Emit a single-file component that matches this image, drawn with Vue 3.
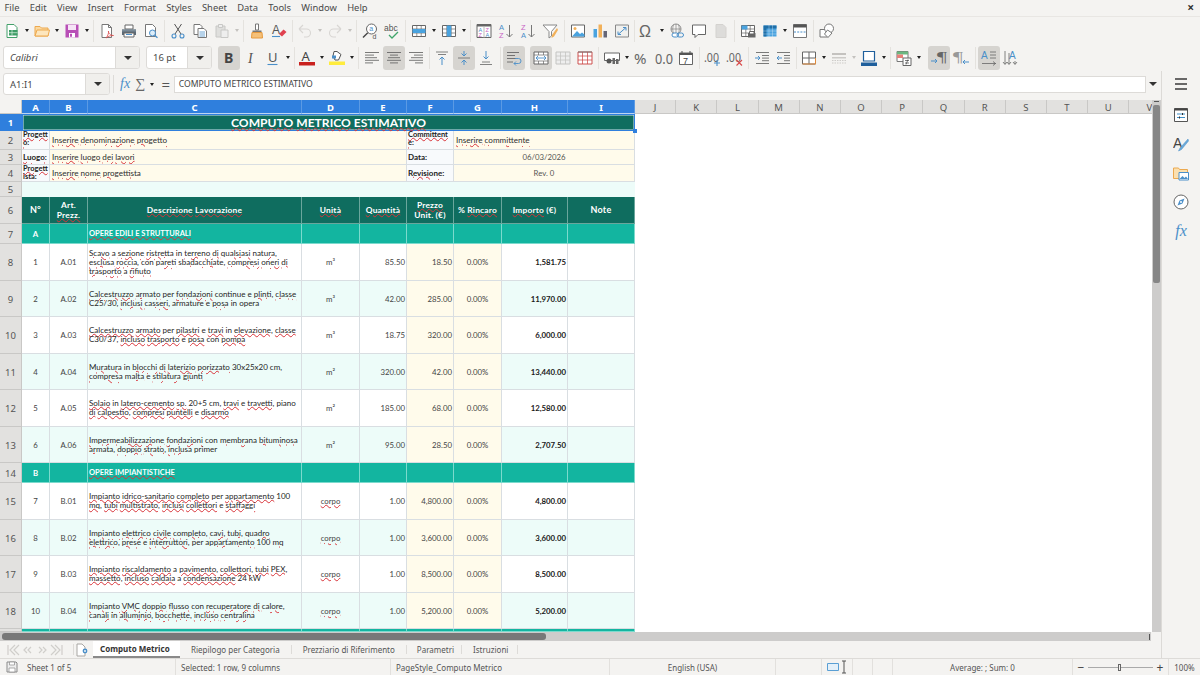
<template>
  <div class="app">
    <div class="menubar">
      <span v-for="m in menus" :key="m">{{ m }}</span>
      <b class="close">×</b>
    </div>

    <div class="toolbar tb1">
      <template v-for="(it, i) in row1" :key="i">
        <span v-if="it.gap" class="gap" :style="{ width: it.gap + 'px' }"><i v-if="it.line"></i></span>
        <span v-else-if="it.drop" class="drop" :class="{ off: it.off }" :style="{ width: it.drop + 'px' }"></span>
        <span v-else class="tool" :class="{ on: it.on }"><svg viewBox="0 0 16 16" v-html="icons[it.n]"></svg></span>
      </template>
    </div>

    <div class="toolbar tb2">
      <div class="combo font"><em>Calibri</em><span class="arrow"></span></div>
      <div class="combo size"><span>16 pt</span><span class="arrow"></span></div>
      <template v-for="(it, i) in row2" :key="i">
        <span v-if="it.gap" class="gap" :style="{ width: it.gap + 'px' }"><i v-if="it.line"></i></span>
        <span v-else-if="it.drop" class="drop" :class="{ off: it.off }" :style="{ width: it.drop + 'px' }"></span>
        <span v-else class="tool" :class="{ on: it.on }"><svg viewBox="0 0 16 16" v-html="icons[it.n]"></svg></span>
      </template>
    </div>

    <div class="middle">
      <div class="work">
        <div class="formula">
          <div class="combo namebox"><span>A1:I1</span><span class="arrow"></span></div>
          <i class="fline"></i>
          <span class="fx">fx</span>
          <span class="sigma">∑</span>
          <span class="drop small"></span>
          <span class="equals">=</span>
          <div class="input">COMPUTO METRICO ESTIMATIVO</div>
          <span class="fdrop"></span>
        </div>

        <div class="sheet-wrap">
          <div class="sheet">
            <div class="sh corner"></div>
            <div v-for="(c, i) in columns" :key="c" class="sh col" :class="{ sel: i < 9 }">{{ c }}</div>

            <div class="sh rownum sel">1</div>
            <div class="title"><span><span class="bad">COMPUTO</span> <span class="bad">METRICO</span> <span class="bad">ESTIMATIVO</span></span><i class="handle"></i></div>

            <div class="sh rownum">2</div>
            <div class="c label wrapword"><span class="bad">Progetto:</span></div>
            <div class="c yellow left merged3"><div><span v-for="(w, i) in words('Inserire denominazione progetto')" :key="i"><span :class="{ bad: w.bad }">{{ w.t }}</span>{{ ' ' }}</span></div></div>
            <div class="c label wrapword"><span class="bad">Committente:</span></div>
            <div class="c yellow left merged2"><div><span class="bad">Inserire</span> <span class="bad">committente</span></div></div>

            <div class="sh rownum">3</div>
            <div class="c label"><span class="bad">Luogo:</span></div>
            <div class="c yellow left merged3"><div><span v-for="(w, i) in words('Inserire luogo dei lavori')" :key="i"><span :class="{ bad: w.bad }">{{ w.t }}</span>{{ ' ' }}</span></div></div>
            <div class="c label">Data:</div>
            <div class="c yellow center merged2 tiny">06/03/2026</div>

            <div class="sh rownum">4</div>
            <div class="c label wrapword"><span class="bad">Progettista:</span></div>
            <div class="c yellow left merged3"><div><span v-for="(w, i) in words('Inserire nome progettista')" :key="i"><span :class="{ bad: w.bad }">{{ w.t }}</span>{{ ' ' }}</span></div></div>
            <div class="c label"><span class="bad">Revisione:</span></div>
            <div class="c yellow center merged2 tiny">Rev. 0</div>

            <div class="sh rownum">5</div>
            <div class="c blank all"></div>

            <div class="sh rownum">6</div>
            <div v-for="h in heads" :key="h.t" class="c head" :class="h.cls"><div v-html="h.t"></div></div>

            <template v-for="r in rows" :key="r.n">
              <div class="sh rownum">{{ r.n }}</div>
              <template v-if="r.section">
                <div class="c sect center strong">{{ r.id }}</div>
                <div class="c sect"></div>
                <div class="c sect left strong"><span class="bad sectbad">{{ r.section }}</span></div>
                <div v-for="k in 6" :key="k" class="c sect"></div>
              </template>
              <template v-else>
                <div class="c center" :class="{ alt: r.alt }">{{ r.no }}</div>
                <div class="c center" :class="{ alt: r.alt }">{{ r.art }}</div>
                <div class="c left desc" :class="{ alt: r.alt }">
                  <div v-for="(l, j) in r.lines" :key="j">
                    <span v-for="(w, k) in words(l)" :key="k"><span :class="{ bad: w.bad }">{{ w.t }}</span>{{ ' ' }}</span>
                  </div>
                </div>
                <div class="c center" :class="{ alt: r.alt }"><span :class="{ bad: r.unit === 'corpo' }">{{ r.unit }}</span></div>
                <div class="c right" :class="{ alt: r.alt }">{{ r.qty }}</div>
                <div class="c right yellow">{{ r.price }}</div>
                <div class="c center yellow">0.00%</div>
                <div class="c right strong dark" :class="{ alt: r.alt }">{{ r.total }}</div>
                <div class="c" :class="{ alt: r.alt }"></div>
              </template>
            </template>

            <div class="sh rownum"></div>
            <div v-for="k in 9" :key="'e' + k" class="c sect"></div>
          </div>

          <div class="vscroll"><i class="vmark"></i><i class="vthumb"></i></div>
        </div>

        <div class="hscroll"><i class="hthumb"></i><i class="hmark"></i></div>

        <div class="tabbar">
          <div class="nav">
            <svg viewBox="0 0 56 12" width="56" height="12">
              <g fill="none" stroke="#d0cecb" stroke-width="1.2">
                <path d="M1 1v10M8 1 3 6l5 5M12 1 7 6l5 5" />
                <path d="M20 3l-3 3 3 3M24 3l-3 3 3 3M32 3l3 3-3 3M36 3l3 3-3 3" />
                <path d="M44 1l5 5-5 5M48 1l5 5-5 5M55 1v10" />
              </g>
            </svg>
          </div>
          <i class="tabline"></i>
          <svg class="newsheet" viewBox="0 0 12 14" width="12" height="14"><path d="M1 1h5l3 3v9H1z" fill="#fff" stroke="#a8a6a3" /><circle cx="9" cy="8" r="2.400" fill="#4a8fc9" /><circle cx="9" cy="8" r=".9" fill="#fff" /></svg>
          <div class="tab active"><span>Computo Metrico</span></div>
          <div v-for="t in tabs" :key="t" class="tab">{{ t }}</div>
        </div>
      </div>

      <aside class="sidebar">
        <svg viewBox="0 0 16 16"><path d="M2 3h12M2 8h12M2 13h12" stroke="#3a3a3a" stroke-width="1.6" fill="none" /></svg>
        <svg viewBox="0 0 16 16"><path d="M1.5 1.5h13v13h-13z" fill="#fff" stroke="#555" /><path d="M1.5 1.5h13v2h-13z" fill="#444" /><path d="M4 7h8M4 10.5h8" stroke="#3f8fc8" /><path d="M9.5 6v2M6.5 9.5v2" stroke="#333" /></svg>
        <svg viewBox="0 0 16 16"><text x="0" y="12" font-size="14" font-family="Liberation Sans" fill="#444">A</text><path d="M15 3 7 12l-1.5 3 3-1.5L15.500 5z" fill="#6aa9d8" stroke="#4a8fc9" stroke-width=".5" /></svg>
        <svg viewBox="0 0 16 16"><path d="M.5 3h5l1 1.500h8v9H.5z" fill="#fbe0b0" stroke="#eca94f" /><path d="M6 7.500h9.500v7.500H6z" fill="#fff" stroke="#4a8fc9" /><path d="M6.500 14l3-3 2 2 1.500-1.500 2 2.500z" fill="#4a8fc9" /></svg>
        <svg viewBox="0 0 16 16"><circle cx="8" cy="8" r="7" fill="#fff" stroke="#666" /><path d="M11.500 4.500 9.500 9.500l-5 2 2-5z" fill="#4a8fc9" /><circle cx="8" cy="8" r="1" fill="#fff" /></svg>
        <span class="side-fx">fx</span>
      </aside>
    </div>

    <div class="statusbar">
      <div class="st" style="width: 176px">
        <svg viewBox="0 0 12 12" width="12" height="12"><path d="M1 1h9l1 1v9H1z" fill="#eee" stroke="#8a8a8a" /><path d="M3 7h6v4H3zM3.500 1h5v3h-5z" fill="#fff" stroke="#8a8a8a" stroke-width=".7" /></svg>
        <span>Sheet 1 of 5</span>
      </div>
      <div class="st tight" style="width: 215px">Selected: 1 row, 9 columns</div>
      <div class="st tight" style="width: 219px">PageStyle_Computo Metrico</div>
      <div class="st mid" style="width: 166px">English (USA)</div>
      <div class="st" style="width: 46px"></div>
      <div class="st mid" style="width: 31px">
        <svg viewBox="0 0 20 14" width="20" height="14"><path d="M.5 3.500h11v7H.5z" fill="#e4f0f9" stroke="#5a9fd4" /><path d="M15 1h4M15 13h4M17 1v12" stroke="#555" fill="none" /></svg>
      </div>
      <div class="st" style="width: 20px"></div>
      <div class="st" style="width: 20px"></div>
      <div class="st mid" style="width: 180px">Average: ; Sum: 0</div>
      <div class="zoom">
        <span class="zbtn">−</span>
        <span class="zline"><i></i></span>
        <span class="zbtn">+</span>
      </div>
      <div class="st mid pct">100%</div>
    </div>
  </div>
</template>

<script setup>
const menus = ['File', 'Edit', 'View', 'Insert', 'Format', 'Styles', 'Sheet', 'Data', 'Tools', 'Window', 'Help']
const columns = 'ABCDEFGHIJKLMNOPQRSTUV'.split('')
const tabs = ['Riepilogo per Categoria', 'Prezziario di Riferimento', 'Parametri', 'Istruzioni']

// words the spell checker does not flag
const okWords = ['a', 'in', 'e', 'per', 'con', 'continue', 'armature', 'opera', 'piano', 'primer', '100', '24', 'kW', 'cm', '30x25x20', 'cm,', '20+5', 'C25/30,', 'C30/37,']

function words(text) {
  return text.split(' ').map(t => ({ t, bad: !okWords.includes(t) }))
}

// toolbar strings: name, name* = pressed, d = dropdown, x = dimmed dropdown, |n = separator, _n = blank space
function parse(str) {
  return str.split(' ').map(s => {
    if (s[0] === '|') return { gap: +s.slice(1), line: true }
    if (s[0] === '_') return { gap: +s.slice(1) }
    if (s === 'd') return { drop: 8 }
    if (s === 'x') return { drop: 8, off: true }
    if (s.endsWith('*')) return { n: s.slice(0, -1), on: true }
    return { n: s }
  })
}

const row1 = parse('new d open d save d |5 pdf print preview |5 cut copy paste x |5 brush clearfmt |4 undo x redo x |5 find spell |5 rowsbtn d colsbtn d |5 sort asc desc filter |6 image chart pivot |3 omega d link comment hf |5 printarea freeze d split |5 shapes')
const row2 = parse('bold* italic under d |4 fcolor d hilite d |5 aleft acenter* aright |4 atop amid* abot |6 wrap* _5 merge* unmerge redtable |5 money d percent number date |5 addec deldec |5 indent outdent |3 borders d lines x bcolor d |5 cond d _5 ltr* rtl |6 tbl* tbr')

const grid = '<path d="M1.500 2.500h13v11h-13z" fill="#fff" stroke="#666"/><path d="M1.500 6h13M1.500 10h13M5.800 2.500v11M10.200 2.500v11" stroke="#666" stroke-width=".7"/>'
// stacked lines, each as [x1, x2], evenly spaced
const stack = (pairs, top = 2.5, step = 2.6, c = '#5a5a5a') =>
  pairs.map((p, i) => `<path d="M${p[0]} ${top + i * step}H${p[1]}" stroke="${c}" stroke-width=".8"/>`).join('')

const icons = {
  new: '<path d="M3 1.500h7l3 3v10H3z" fill="#fff" stroke="#43a06a"/><path d="M5 7h8.500v5.500H5z" fill="#3e9c66"/><path d="M8 7v5.500M5 9.700h8.500" stroke="#d8f0e0" stroke-width=".7"/>',
  open: '<path d="M1 13V3.500h5l1.500 1.500H14V13z" fill="#fbd9a0" stroke="#eda94f"/><path d="M1 13l2-6h12.500L14 13z" fill="#fde6bd" stroke="#eda94f"/>',
  save: '<path d="M1.500 1.500h13v13h-13z" fill="#b84fb6"/><path d="M4 2h8v5H4z" fill="#f6e4f6"/><path d="M5 10h6v4.500H5z" fill="#fff"/><path d="M6 10.800h2v3H6z" fill="#b84fb6"/>',
  pdf: '<path d="M3 1.500h6.500l3 3v10H3z" fill="#fff" stroke="#777"/><path d="M9.500 1.500v3h3" fill="none" stroke="#777"/><path d="M7 15c2-2 3-6 2.500-7-.5 2 2 4.500 5 4.500-3 0-5 .5-7.500 2.500z" fill="none" stroke="#d94a4a" stroke-width=".8"/>',
  print: '<path d="M4 2h8v4H4z" fill="#fff" stroke="#666"/><path d="M1 6.500h14v5.500H1z" fill="#5c6a76"/><path d="M1 6.500h14v2H1z" fill="#7a8a96"/><path d="M3 10h10v4H3z" fill="#fff" stroke="#666"/><path d="M5 11.500h6" stroke="#4a8fc9"/>',
  preview: '<path d="M2.500 1.500h7l3 3v9h-10z" fill="#fff" stroke="#777"/><circle cx="9.500" cy="10" r="3" fill="#dcedf9" stroke="#4a8fc9"/><path d="M11.500 12.300l3 2.500" stroke="#4a8fc9" stroke-width="1.400"/>',
  cut: '<path d="M4.500 1l6.500 10M11.500 1 5 11" stroke="#555" stroke-width="1" fill="none"/><circle cx="4" cy="13" r="2" fill="none" stroke="#4a8fc9" stroke-width="1.100"/><circle cx="12" cy="13" r="2" fill="none" stroke="#4a8fc9" stroke-width="1.100"/>',
  copy: '<path d="M2 1.500h6l2 2v8H2z" fill="#fff" stroke="#777"/><path d="M6 5.500h6l2.500 2.500v6.500H6z" fill="#fff" stroke="#777"/><path d="M7.500 9h5.500M7.500 11h5.500M7.500 13h5.500" stroke="#4a8fc9" stroke-width=".8"/>',
  paste: '<path d="M2 3h9v11H2z" fill="#dfdfdd" stroke="#c8c8c6"/><path d="M4.500 1.500h4v3h-4z" fill="#eee" stroke="#c8c8c6"/><path d="M7 7h7v7.500H7z" fill="#eee" stroke="#c8c8c6"/>',
  brush: '<path d="M6.500 1h3v6h-3z" fill="#fff" stroke="#777"/><path d="M3.500 7.500h9v2h-9z" fill="#777"/><path d="M3 9.500h10l.5 5.500h-11z" fill="#f5c078" stroke="#e69a3f"/>',
  clearfmt: '<text x="1" y="11" font-size="12" font-family="Liberation Sans" fill="#555">A</text><path d="M1 13.500h8" stroke="#4a8fc9" stroke-width="1.100"/><path d="M8 11l4.500-4.500 3 2.500-4.500 4.500z" fill="#e0414f"/>',
  undo: '<path d="M2 6l4-4M2 6l4 4M2 6h7.500a4 4 0 0 1 0 8H7" fill="none" stroke="#d8d6d3" stroke-width="1.100"/>',
  redo: '<path d="M14 6l-4-4M14 6l-4 4M14 6H6.500a4 4 0 0 0 0 8H9" fill="none" stroke="#d8d6d3" stroke-width="1.100"/>',
  find: '<circle cx="9.500" cy="6" r="5" fill="#fff" stroke="#666"/><path d="M5.800 9.800 1 14.500" stroke="#444" stroke-width="1.400"/><text x="7.200" y="8" font-size="7" font-family="Liberation Sans" fill="#4a8fc9">a</text><text x="10.500" y="15.500" font-size="7" font-family="Liberation Sans" fill="#555">d</text>',
  spell: '<text x="0" y="8" font-size="8.500" font-family="Liberation Sans" fill="#555">abc</text><path d="M5 12l3 3 6-6" fill="none" stroke="#3fa56a" stroke-width="1.300"/>',
  rowsbtn: grid + '<path d="M1.500 6h13v4h-13z" fill="#4aa3df"/>',
  colsbtn: grid + '<path d="M5.800 2.500h4.400v11H5.800z" fill="#4aa3df"/>',
  sort: '<path d="M1 1.500h14v13H1z" fill="#fff" stroke="#666"/><path d="M1 1.500h14v2H1z" fill="#666"/><path d="M8 4v10.500" stroke="#bbb"/><text x="2.500" y="9" font-size="5.500" font-family="Liberation Sans" fill="#4a8fc9">A</text><text x="2.500" y="14" font-size="5.500" font-family="Liberation Sans" fill="#c860c4">Z</text><text x="9.500" y="9" font-size="5.500" font-family="Liberation Sans" fill="#c860c4">Z</text><text x="9.500" y="14" font-size="5.500" font-family="Liberation Sans" fill="#4a8fc9">A</text>',
  asc: '<text x="1" y="7" font-size="7.500" font-family="Liberation Sans" fill="#4a8fc9">A</text><text x="1" y="15" font-size="7.500" font-family="Liberation Sans" fill="#c860c4">Z</text><path d="M11.500 2v12M8.500 11l3 3 3-3" fill="none" stroke="#777"/>',
  desc: '<text x="1" y="7" font-size="7.500" font-family="Liberation Sans" fill="#c860c4">Z</text><text x="1" y="15" font-size="7.500" font-family="Liberation Sans" fill="#4a8fc9">A</text><path d="M11.500 2v12M8.500 11l3 3 3-3" fill="none" stroke="#777"/>',
  filter: '<path d="M1 2h14L9.500 8.500V13L7 15V8.500z" fill="#fff" stroke="#888"/><path d="M15 5 10 12l-.5 3 2.500-1.500L16 7z" fill="#f2b15a"/>',
  image: '<path d="M1.500 2h13v12h-13z" fill="#fff" stroke="#666"/><circle cx="5" cy="5.500" r="1.500" fill="#f2b15a"/><path d="M2 13.500 7 8l3 3 2-1.500 2.500 2v2z" fill="#4aa3df"/>',
  chart: '<path d="M1.500 6h3.500v8.500H1.500z" fill="#4aa3df"/><path d="M6.500 1.500H10v13H6.500z" fill="#f2b15a"/><path d="M11.500 8H15v6.500h-3.500z" fill="#667"/>',
  pivot: '<path d="M1.500 2h13v12h-13z" fill="#f0f0ee" stroke="#888"/><path d="M4 11.500 12 4.500M9 4.500h3v3M7 11.500H4v-3" fill="none" stroke="#4a8fc9"/>',
  omega: '<text x="0" y="14" font-size="16" font-family="Liberation Sans" fill="#666">Ω</text>',
  link: '<circle cx="7" cy="6" r="5" fill="none" stroke="#777" stroke-width=".8"/><path d="M2 6h10M7 1v10M4.500 1.800c-1 2.500-1 6 0 8.400M9.500 1.800c1 2.500 1 6 0 8.400" fill="none" stroke="#777" stroke-width=".6"/><rect x="3" y="10" width="6.500" height="4" rx="2" fill="#fff" stroke="#4a8fc9"/><rect x="8" y="10" width="6.500" height="4" rx="2" fill="none" stroke="#4a8fc9"/>',
  comment: '<path d="M1.500 2h13v9.500H7L4 14.500v-3H1.500z" fill="#fff" stroke="#666"/>',
  hf: '<path d="M3 1.500h7l3 3v10H3z" fill="#dddcda" stroke="#d4d2cf"/>',
  printarea: grid + '<path d="M1.500 2.500h6v4h-6z" fill="#4aa3df"/><path d="M8 10h7.500v4.500H8z" fill="#666"/><path d="M9.500 8.500h4.500v2.500H9.500z" fill="#fff" stroke="#666"/>',
  freeze: '<path d="M1.500 2.500h13v11h-13z" fill="#4aa3df"/><path d="M1.500 2.500h13v3h-13zM1.500 2.500h3v11h-3z" fill="#1f6fa8"/><path d="M1.500 8h13M1.500 11h13M7 2.500v11M10.500 2.500v11" stroke="#fff" stroke-width=".6" stroke-dasharray="1 1"/>',
  split: '<path d="M1.500 1.500h13v13h-13z" fill="#fff" stroke="#777"/><path d="M1.500 1.500h13v3h-13z" fill="#555"/><path d="M2 9h12" stroke="#4a8fc9" stroke-dasharray="2 1.200"/>',
  shapes: '<path d="M1 6.500h7.500V14H1z" fill="#fff" stroke="#777"/><circle cx="10" cy="5.500" r="4.500" fill="#fff" stroke="#777"/><path d="M8.500 7l4.500 3-4 4.500L5.500 11z" fill="#fff" stroke="#777"/>',
  bold: '<text x="3" y="13" font-size="14" font-weight="700" font-family="Noto Sans" fill="#444">B</text>',
  italic: '<text x="5" y="13" font-size="14" font-style="italic" font-family="Liberation Serif" fill="#555">I</text>',
  under: '<text x="3" y="11.500" font-size="13" font-family="Noto Sans" fill="#555">U</text><path d="M2.500 14.500h10" stroke="#4a8fc9" stroke-width="1.100"/>',
  fcolor: '<text x="2.500" y="11" font-size="13" font-family="Noto Sans" fill="#444">A</text><path d="M0 12h16v3.500H0z" fill="#c9211e"/>',
  hilite: '<path d="M5 1.500h3l4 3-2.500 5.500H6L4 6z" fill="#fff" stroke="#555"/><path d="M3 5.500h4v3H3z" fill="#4a8fc9"/><path d="M0 11.500h16V15H0z" fill="#ffec3d"/>',
  aleft: stack([[1, 15], [1, 10], [1, 13], [1, 15], [1, 9]]),
  acenter: stack([[1, 15], [4, 12], [2, 14], [1, 15], [4, 12]]),
  aright: stack([[1, 15], [6, 15], [3, 15], [1, 15], [7, 15]]),
  atop: '<path d="M2 2h12M4 4.500h8" stroke="#666" stroke-width=".8"/><path d="M8 15V7M5.500 9.500 8 7l2.500 2.500" fill="none" stroke="#4a8fc9"/>',
  amid: '<path d="M2 8h12" stroke="#666" stroke-width=".8"/><path d="M8 1v5M5.500 3.500 8 6l2.500-2.500M8 15v-5M5.500 12.500 8 10l2.500 2.500" fill="none" stroke="#4a8fc9"/>',
  abot: '<path d="M2 14.500h12M4 12h8" stroke="#666" stroke-width=".8"/><path d="M8 1v8M5.500 6.500 8 9l2.500-2.500" fill="none" stroke="#4a8fc9"/>',
  wrap: stack([[1, 13], [1, 9], [1, 10]], 2.5, 3) + stack([[1, 7]], 12) + '<path d="M9 8.500h3.500a2 2 0 0 1 0 5H8M10 11.500l-2 2 2 2" fill="none" stroke="#4a8fc9" stroke-width=".9"/>',
  merge: '<path d="M1 2h14v12H1z" fill="#fff" stroke="#666"/><path d="M1 5h14M1 11h14M5.500 2v3M10.500 2v3M5.500 11v3M10.500 11v3" stroke="#666" stroke-width=".7"/><path d="M3 8h10M5 6l-2 2 2 2M11 6l2 2-2 2" fill="none" stroke="#4a8fc9" stroke-width=".9"/>',
  unmerge: '<path d="M1 2h14v12H1z" fill="#eee" stroke="#c4c4c2"/><path d="M1 6h14M1 10h14M5.500 2v12M10.500 2v12" stroke="#c4c4c2" stroke-width=".8"/>',
  redtable: '<path d="M1 2h14v12H1z" fill="#fff" stroke="#c9413f" stroke-width=".9"/><path d="M1 6h14M1 10h14M5.500 2v12M10.500 2v12" stroke="#c9413f" stroke-width=".7"/><path d="M1 2h14" stroke="#777"/>',
  money: '<path d="M.5 3h15v7.500H.5z" fill="#fff" stroke="#666"/><circle cx="5" cy="11" r="2.500" fill="#555"/><path d="M8.500 8h2.500v6H8.500zM12 9h2.500v5H12z" fill="#666"/>',
  percent: '<text x="0" y="14" font-size="15" font-family="Noto Sans" fill="#666">%</text>',
  number: '<text x="-1" y="13.500" font-size="14" font-family="Noto Sans" fill="#666" textLength="18" lengthAdjust="spacingAndGlyphs">0.0</text>',
  date: '<path d="M1.500 3h13v11.500h-13z" fill="#fff" stroke="#666"/><path d="M1.500 3h13v2h-13z" fill="#555"/><path d="M4 1v3M12 1v3" stroke="#555"/><text x="5" y="13.500" font-size="9" font-family="Liberation Sans" fill="#444">7</text>',
  addec: '<text x="-1" y="12" font-size="13" font-family="Noto Sans" fill="#666" textLength="15" lengthAdjust="spacingAndGlyphs">.00</text><path d="M9 13h6M12 10v6" stroke="#4a8fc9" stroke-width="1.100"/>',
  deldec: '<text x="-1" y="12" font-size="13" font-family="Noto Sans" fill="#666" textLength="15" lengthAdjust="spacingAndGlyphs">.00</text><path d="M9.500 10l5.500 5.500M15 10l-5.500 5.500" stroke="#d94a4a" stroke-width="1.100"/>',
  indent: stack([[2, 15]], 2.5) + stack([[8, 15], [8, 15], [8, 15]], 5.5) + stack([[2, 15]], 13.5) + '<path d="M1 8h5M4 6l2 2-2 2" fill="none" stroke="#4a8fc9"/>',
  outdent: stack([[1, 14]], 2.5) + stack([[8, 14], [8, 14], [8, 14]], 5.5) + stack([[1, 14]], 13.5) + '<path d="M1 8h5M3 6 1 8l2 2" fill="none" stroke="#4a8fc9"/>',
  borders: '<path d="M1.500 2h13v12h-13z" fill="#fff" stroke="#666"/><path d="M8 2v12M1.500 8h13" stroke="#666"/><path d="M1.500 14h13M14.500 8v6" stroke="#e08a3c"/>',
  lines: '<path d="M1 3h14v2H1z" fill="#c4c2bf"/><path d="M1 7h14v1.500H1z" fill="#cdcbc8"/><path d="M1 10.500h14M1 13h14" stroke="#cdcbc8" stroke-dasharray="1.500 1"/>',
  bcolor: '<path d="M2.500 1.500h11v9.500h-11z" fill="#fff" stroke="#1f5f9c" stroke-width="1.200"/><path d="M0 12.500h16V16H0z" fill="#1f5f9c"/>',
  cond: '<path d="M1 1.500h11v10H1z" fill="#fff" stroke="#777"/><path d="M1 1.500h11v3H1z" fill="#6cb780"/><path d="M1 4.500h6v3.500H1z" fill="#e7807a"/><path d="M7 8h8v7.500H7z" fill="#fff" stroke="#666"/><path d="M9 10.500h4M9 13h4M12 9.500l-2 5" stroke="#444" stroke-width=".7"/>',
  ltr: '<text x="6" y="12" font-size="15" font-family="Liberation Serif" fill="#666" textLength="10" lengthAdjust="spacingAndGlyphs">¶</text><path d="M0 11h6M4 9l2 2-2 2" fill="none" stroke="#4a8fc9"/>',
  rtl: '<text x="0" y="12" font-size="15" font-family="Liberation Serif" fill="#999" textLength="10" lengthAdjust="spacingAndGlyphs">¶</text><path d="M10 12h6M12 10l-2 2 2 2" fill="none" stroke="#4a8fc9"/>',
  tbl: '<text x="0" y="8.500" font-size="10" font-family="Liberation Sans" fill="#4a8fc9">A</text><path d="M9 2h6M9 5h6M9 8h6M1 13.500h14" fill="none" stroke="#666" stroke-width=".8"/><path d="M12 11.500l2.500 2-2.500 2" fill="none" stroke="#666" stroke-width=".8"/>',
  tbr: '<text x="6" y="9" font-size="10" font-family="Liberation Sans" fill="#4a8fc9">A</text><path d="M2 1v13M6 3v11M0 12l2 2.500L4 12M4 12l2 2.500L8 12M12 11v3M10 12l2 2.500 2-2.500" fill="none" stroke="#666" stroke-width=".8"/>',
}

const heads = [
  { t: 'N°', cls: 'h-lg' },
  { t: 'Art.<br><span class="bad-h">Prezz.</span>' },
  { t: '<span class="bad-h">Descrizione</span> <span class="bad-h">Lavorazione</span>' },
  { t: '<span class="bad-h">Unità</span>' },
  { t: '<span class="bad-h">Quantità</span>' },
  { t: '<span class="bad-h">Prezzo</span><br>Unit. (€)' },
  { t: '% <span class="bad-h">Rincaro</span>' },
  { t: '<span class="bad-h">Importo</span> (€)' },
  { t: 'Note', cls: 'h-lg' },
]

const rows = [
  { n: 7, id: 'A', section: 'OPERE EDILI E STRUTTURALI' },
  { n: 8, no: 1, art: 'A.01', unit: 'm³', qty: '85.50', price: '18.50', total: '1,581.75', lines: ['Scavo a sezione ristretta in terreno di qualsiasi natura,', 'esclusa roccia, con pareti sbadacchiate, compresi oneri di', 'trasporto a rifiuto'] },
  { n: 9, alt: true, no: 2, art: 'A.02', unit: 'm³', qty: '42.00', price: '285.00', total: '11,970.00', lines: ['Calcestruzzo armato per fondazioni continue e plinti, classe', 'C25/30, inclusi casseri, armature e posa in opera'] },
  { n: 10, no: 3, art: 'A.03', unit: 'm³', qty: '18.75', price: '320.00', total: '6,000.00', lines: ['Calcestruzzo armato per pilastri e travi in elevazione, classe', 'C30/37, incluso trasporto e posa con pompa'] },
  { n: 11, alt: true, no: 4, art: 'A.04', unit: 'm²', qty: '320.00', price: '42.00', total: '13,440.00', lines: ['Muratura in blocchi di laterizio porizzato 30x25x20 cm,', 'compresa malta e stilatura giunti'] },
  { n: 12, no: 5, art: 'A.05', unit: 'm²', qty: '185.00', price: '68.00', total: '12,580.00', lines: ['Solaio in latero-cemento sp. 20+5 cm, travi e travetti, piano', 'di calpestio, compresi puntelli e disarmo'] },
  { n: 13, alt: true, no: 6, art: 'A.06', unit: 'm²', qty: '95.00', price: '28.50', total: '2,707.50', lines: ['Impermeabilizzazione fondazioni con membrana bituminosa', 'armata, doppio strato, inclusa primer'] },
  { n: 14, id: 'B', section: 'OPERE IMPIANTISTICHE' },
  { n: 15, no: 7, art: 'B.01', unit: 'corpo', qty: '1.00', price: '4,800.00', total: '4,800.00', lines: ['Impianto idrico-sanitario completo per appartamento 100', 'mq, tubi multistrato, inclusi collettori e staffaggi'] },
  { n: 16, alt: true, no: 8, art: 'B.02', unit: 'corpo', qty: '1.00', price: '3,600.00', total: '3,600.00', lines: ['Impianto elettrico civile completo, cavi, tubi, quadro', 'elettrico, prese e interruttori, per appartamento 100 mq'] },
  { n: 17, no: 9, art: 'B.03', unit: 'corpo', qty: '1.00', price: '8,500.00', total: '8,500.00', lines: ['Impianto riscaldamento a pavimento, collettori, tubi PEX,', 'massetto, incluso caldaia a condensazione 24 kW'] },
  { n: 18, alt: true, no: 10, art: 'B.04', unit: 'corpo', qty: '1.00', price: '5,200.00', total: '5,200.00', lines: ['Impianto VMC doppio flusso con recuperatore di calore,', 'canali in alluminio, bocchette, incluso centralina'] },
]
</script>

<style>
html, body { margin: 0; height: 675px; overflow: hidden; background: #f4f3f1; }
.bad-h { text-decoration: underline wavy #d8343a 1px; text-underline-offset: 0; }
</style>

<style scoped>
.app {
  width: 1200px;
  height: 675px;
  display: flex;
  flex-direction: column;
  background: #f4f3f1;
  font-family: "Noto Sans", sans-serif;
  color: #4a4a4a;
  overflow: hidden;
}
.menubar {
  height: 17px;
  display: flex;
  align-items: center;
  gap: 10.3px;
  padding: 0 0 1px 4.500px;
  font-size: 9.4px;
  position: relative;
  flex: none;
  border-bottom: 1px solid #e8e6e3;
  box-sizing: border-box;
}
.close { position: absolute; right: 6px; top: 0; font-size: 12px; line-height: 16px; color: #333; }
.toolbar { display: flex; align-items: center; flex: none; padding-left: 1px; }
.tb1 { height: 27px; }
.tb2 { height: 27px; padding-left: 3px; }
.tool {
  width: 22px;
  height: 24px;
  flex: none;
  display: flex;
  align-items: center;
  justify-content: center;
  border-radius: 3px;
}
.tool svg { width: 16px; height: 16px; overflow: visible; }
.tool.on { background: #d6d4d0; }
.gap { flex: none; height: 22px; display: flex; justify-content: center; }
.gap i { width: 1px; height: 100%; background: #e4e2de; }
.drop { flex: none; display: flex; align-items: center; justify-content: center; height: 24px; }
.drop::after { content: ""; border: 2.5px solid transparent; border-top: 3px solid #222; border-bottom: 0; }
.drop.off::after { border-top-color: #c4c2bf; }
.drop.small { width: 10px; }
.combo {
  height: 23px;
  display: flex;
  align-items: stretch;
  background: #fff;
  border: 1px solid #dddbd8;
  border-radius: 3px;
  box-sizing: border-box;
  font-size: 9.5px;
  flex: none;
  overflow: hidden;
}
.combo > em, .combo > span:first-child { flex: 1; padding-left: 6px; display: flex; align-items: center; }
.arrow {
  width: 23px;
  flex: none !important;
  background: #f0efec;
  border-left: 1px solid #dddbd8;
  display: flex;
  align-items: center;
  justify-content: center;
}
.arrow::after { content: ""; border: 4px solid transparent; border-top: 4px solid #333; border-bottom: 0; }
.font { width: 137px; }
.size { width: 66px; margin: 0 6px; }
.middle { flex: 1; display: flex; min-height: 0; }
.work { width: 1161px; flex: none; display: flex; flex-direction: column; min-height: 0; }
.formula { height: 29px; flex: none; display: flex; align-items: center; padding-left: 3px; box-sizing: border-box; padding-bottom: 3px; }
.namebox { width: 107px; height: 22px; }
.fline { width: 1px; height: 18px; background: #dddbd8; margin: 0 4px 0 3px; }
.fx { font-family: "Liberation Serif", serif; font-style: italic; font-size: 14px; color: #4a8fc9; width: 15px; text-align: center; }
.sigma { font-size: 14px; margin-left: 3px; width: 12px; color: #666; font-family: "Liberation Serif", serif; }
.equals { font-size: 15px; width: 17px; text-align: center; color: #555; margin-left: 1px; }
.input {
  width: 972px;
  height: 17px;
  line-height: 15px;
  background: #fff;
  border: 1px solid #dddbd8;
  box-sizing: border-box;
  padding-left: 4px;
  font-size: 8.6px;
  color: #444;
  flex: none;
}
.fdrop { width: 16px; display: flex; justify-content: center; }
.fdrop::after { content: ""; border: 4px solid transparent; border-top: 4px solid #333; border-bottom: 0; }

.sheet-wrap { height: 532px; flex: none; display: flex; background: #fff; overflow: hidden; }
.sheet {
  width: 1152px;
  flex: none;
  display: grid;
  overflow: hidden;
  grid-template-columns: 22px 28px 38px 214px 58px 47px 47px 48px 66px 67px repeat(13, 41.2px);
  grid-template-rows: 14px 17px 19px 15px 17px 15px 27px 20px 37px 36px 37px 36px 37px 36px 20px 37px 36px 37px 36px 3px;
  align-content: start;
  font-family: "Lato", sans-serif;
}
.sh {
  background: #e2e1df;
  color: #555;
  border-right: 1px solid #c9c8c6;
  border-bottom: 1px solid #c9c8c6;
  box-sizing: border-box;
  display: flex;
  align-items: center;
  justify-content: center;
  font-family: "Noto Sans", sans-serif;
  font-size: 9.5px;
  padding-top: 1px;
}
.corner { background: #f4f3f1; }
.col.sel { background: #2f7fdd; color: #fff; font-weight: 700; border-right-color: #5a9ae4; border-bottom-color: #bcd5f2; }
.rownum.sel { background: #2f7fdd; color: #fff; font-weight: 700; border-color: #2f7fdd; }
.rownum { grid-column: 1; }
.title {
  grid-column: 2 / 11;
  background: #0f6d5f;
  color: #fff;
  font-weight: 700;
  font-size: 12.1px;
  display: flex;
  align-items: center;
  justify-content: center;
  border: 1px solid #2f7fdd;
  box-sizing: border-box;
  position: relative;
  box-shadow: inset 0 0 0 .5px #cfe3f5;
}
.handle { position: absolute; right: -3px; bottom: -3px; width: 4px; height: 4px; background: #2f7fdd; z-index: 1; }
.c {
  box-sizing: border-box;
  border-right: 1px solid #d9dee2;
  border-bottom: 1px solid #d9dee2;
  background: #fff;
  font-size: 7.8px;
  line-height: 9px;
  color: #444;
  display: flex;
  align-items: center;
  min-width: 0;
  overflow: hidden;
}
.center, .right { padding-top: 1px; }
.center { justify-content: center; text-align: center; }
.right { justify-content: flex-end; padding-right: 1px; }
.left { justify-content: flex-start; padding-left: 1px; }
.alt { background: #edfcf9; }
.c.yellow { background: #fffbeb; }
.label { background: #f8fafc; font-weight: 700; padding-left: 1px; color: #222; font-size: 8px; }
.c.wrapword { display: block; word-break: break-all; padding-top: 0; line-height: 7.500px; font-size: 7.5px; }
.merged3 { grid-column: span 4; font-size: 8.1px; padding-left: 2px; color: #2e2e2e; }
.merged2 { grid-column: span 3; font-size: 8.1px; padding-left: 2px; color: #2e2e2e; }
.merged3 span, .merged2 span { white-space: pre; }
.c.center.merged2 { padding-left: 0; }
.c.tiny { font-size: 7.8px; color: #555; }
.all { grid-column: span 9; background: #edfcf9; border: 0; }
.head {
  background: #0f6d5f;
  color: #fff;
  font-weight: 700;
  justify-content: center;
  text-align: center;
  line-height: 10px;
  font-size: 8.4px;
  border-color: #6aa69c;
  letter-spacing: .2px;
}
.h-lg { font-size: 9px; }
.sect { background: #13b5a0; color: #fff; border-color: #7cdacd; }
.strong { font-weight: 700; }
.dark { color: #1a1a1a; }
.sectbad { font-size: 7.500px; }
.c.desc { flex-direction: column; align-items: flex-start; justify-content: center; white-space: nowrap; font-size: 8px; color: #262626; }
.desc span { white-space: pre; }
.bad { text-decoration: underline wavy #d8343a 1px; text-underline-offset: 0; }

.vscroll { width: 9px; flex: none; background: #cdcccb; position: relative; }
.vthumb { position: absolute; left: 1px; top: 5px; width: 7px; height: 178px; background: #868686; border-radius: 2px; }
.vmark { position: absolute; left: 2px; top: 1px; width: 5px; height: 1px; background: #555; }
.hscroll { height: 9px; flex: none; background: #cdcccb; position: relative; margin-right: 10px; }
.hthumb { position: absolute; left: 2px; top: 1px; width: 544px; height: 7px; background: #787878; border-radius: 3px; }
.hmark { position: absolute; right: 1px; top: 2px; width: 1px; height: 6px; background: #555; }
.tabbar { height: 17px; flex: none; display: flex; align-items: stretch; font-size: 8px; padding-left: 7px; color: #555; }
.nav { width: 59px; display: flex; align-items: center; flex: none; }
.tabline { width: 1px; background: #dddbd8; margin: 3px 1px 3px 7px; flex: none; }
.newsheet { margin: 2px 0 0 1px; flex: none; }
.tab {
  padding: 0 12px 0 11px;
  display: flex;
  align-items: center;
  position: relative;
  white-space: nowrap;
}
.tab::after { content: ""; position: absolute; right: 0; top: 4px; bottom: 4px; width: 1px; background: #dddbd8; }
.tab:nth-last-child(2) { padding: 0 8px 0 10px; }
.tab:last-child { padding: 0 10px 0 11px; }
.tab.active {
  background: #fff;
  color: #333;
  font-weight: 700;
  border-bottom: 2px solid #8a8a8a;
  padding: 0 0 0 7px;
  margin: 0 0 0 5px;
  box-sizing: border-box;
  width: 87px;
}
.tab.active::after { display: none; }
.sidebar {
  flex: 1;
  border-left: 1px solid #dcdad7;
  display: flex;
  flex-direction: column;
  align-items: center;
  padding-top: 5px;
  gap: 13px;
}
.sidebar svg { width: 16px; height: 16px; flex: none; }
.sidebar svg:nth-child(2) { margin-top: 2px; }
.side-fx { font-family: "Liberation Serif", serif; font-style: italic; font-size: 16px; line-height: 16px; color: #4a8fc9; }
.statusbar {
  height: 17px;
  flex: none;
  display: flex;
  align-items: center;
  border-top: 1px solid #dddbd8;
  box-sizing: border-box;
  font-size: 8px;
  color: #555;
}
.st {
  height: 100%;
  display: flex;
  align-items: center;
  gap: 9px;
  padding-left: 6px;
  box-sizing: border-box;
  border-right: 1px solid #e2e0dd;
  flex: none;
  white-space: nowrap;
}
.st.tight { padding-left: 5px; }
.st.mid { justify-content: center; padding-left: 0; }
.zoom { width: 96px; display: flex; align-items: center; gap: 3px; padding-left: 4px; box-sizing: border-box; flex: none; border-right: 1px solid #e2e0dd; height: 100%; }
.zbtn { width: 8px; text-align: center; font-size: 12px; color: #444; }
.zline { width: 65px; height: 1px; background: #aaa; position: relative; }
.zline i { position: absolute; left: 30px; top: -3px; width: 3px; height: 7px; background: #f4f3f1; border: 1px solid #666; box-sizing: border-box; }
.pct { border-right: 0; flex: 1; }
</style>
